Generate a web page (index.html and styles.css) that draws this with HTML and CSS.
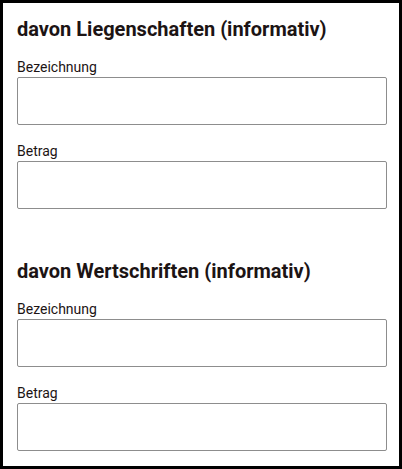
FILE: index.html
```html
<!DOCTYPE html>
<html lang="de">
<head>
  <meta charset="UTF-8" />
  <title>Vermögen</title>
  <meta name="viewport" content="width=device-width, initial-scale=1" />
  <link rel="stylesheet" href="styles.css">
</head>
<body>

<div class="panel">
  <!-- Liegenschaften -->
  <section class="group">
    <h2>davon Liegenschaften (informativ)</h2>
    <div class="field">
      <label for="lieg-bez">Bezeichnung</label>
      <input type="text" id="lieg-bez" />
    </div>
    <div class="field">
      <label for="lieg-betrag">Betrag</label>
      <input type="text" id="lieg-betrag" />
    </div>
  </section>

  <!-- Wertschriften -->
  <section class="group">
    <h2>davon Wertschriften (informativ)</h2>
    <div class="field">
      <label for="wert-bez">Bezeichnung</label>
      <input type="text" id="wert-bez" />
    </div>
    <div class="field">
      <label for="wert-betrag">Betrag</label>
      <input type="text" id="wert-betrag" />
    </div>
  </section>
</div>

</body>
</html>
```

FILE: styles.css
```css
* {
  box-sizing: border-box;
  font-family: Roboto, 'Noto Sans', sans-serif;
}
body {
  margin: 0;
  background: #fff;
  color: #1c1414;
}
.panel {
  height: 469px;
  border: 3px solid #000;
  padding: 14px 12px 14px 14px;
  overflow: hidden;
}
.group + .group {
  margin-top: 50px;
}
.group h2 {
  margin: 0 0 2px;
  font-size: 20px;
  line-height: 24px;
  font-weight: 700;
}
.field {
  margin-top: 18px;
}
.field label {
  display: block;
  font-size: 14px;
  line-height: 16px;
  margin-bottom: 2px;
}
.field input {
  display: block;
  width: 100%;
  height: 48px;
  margin: 0;
  padding: 0 10px;
  border: 1px solid #8d8d8d;
  border-radius: 2px;
  background: #fff;
  font-size: 14px;
}
```
